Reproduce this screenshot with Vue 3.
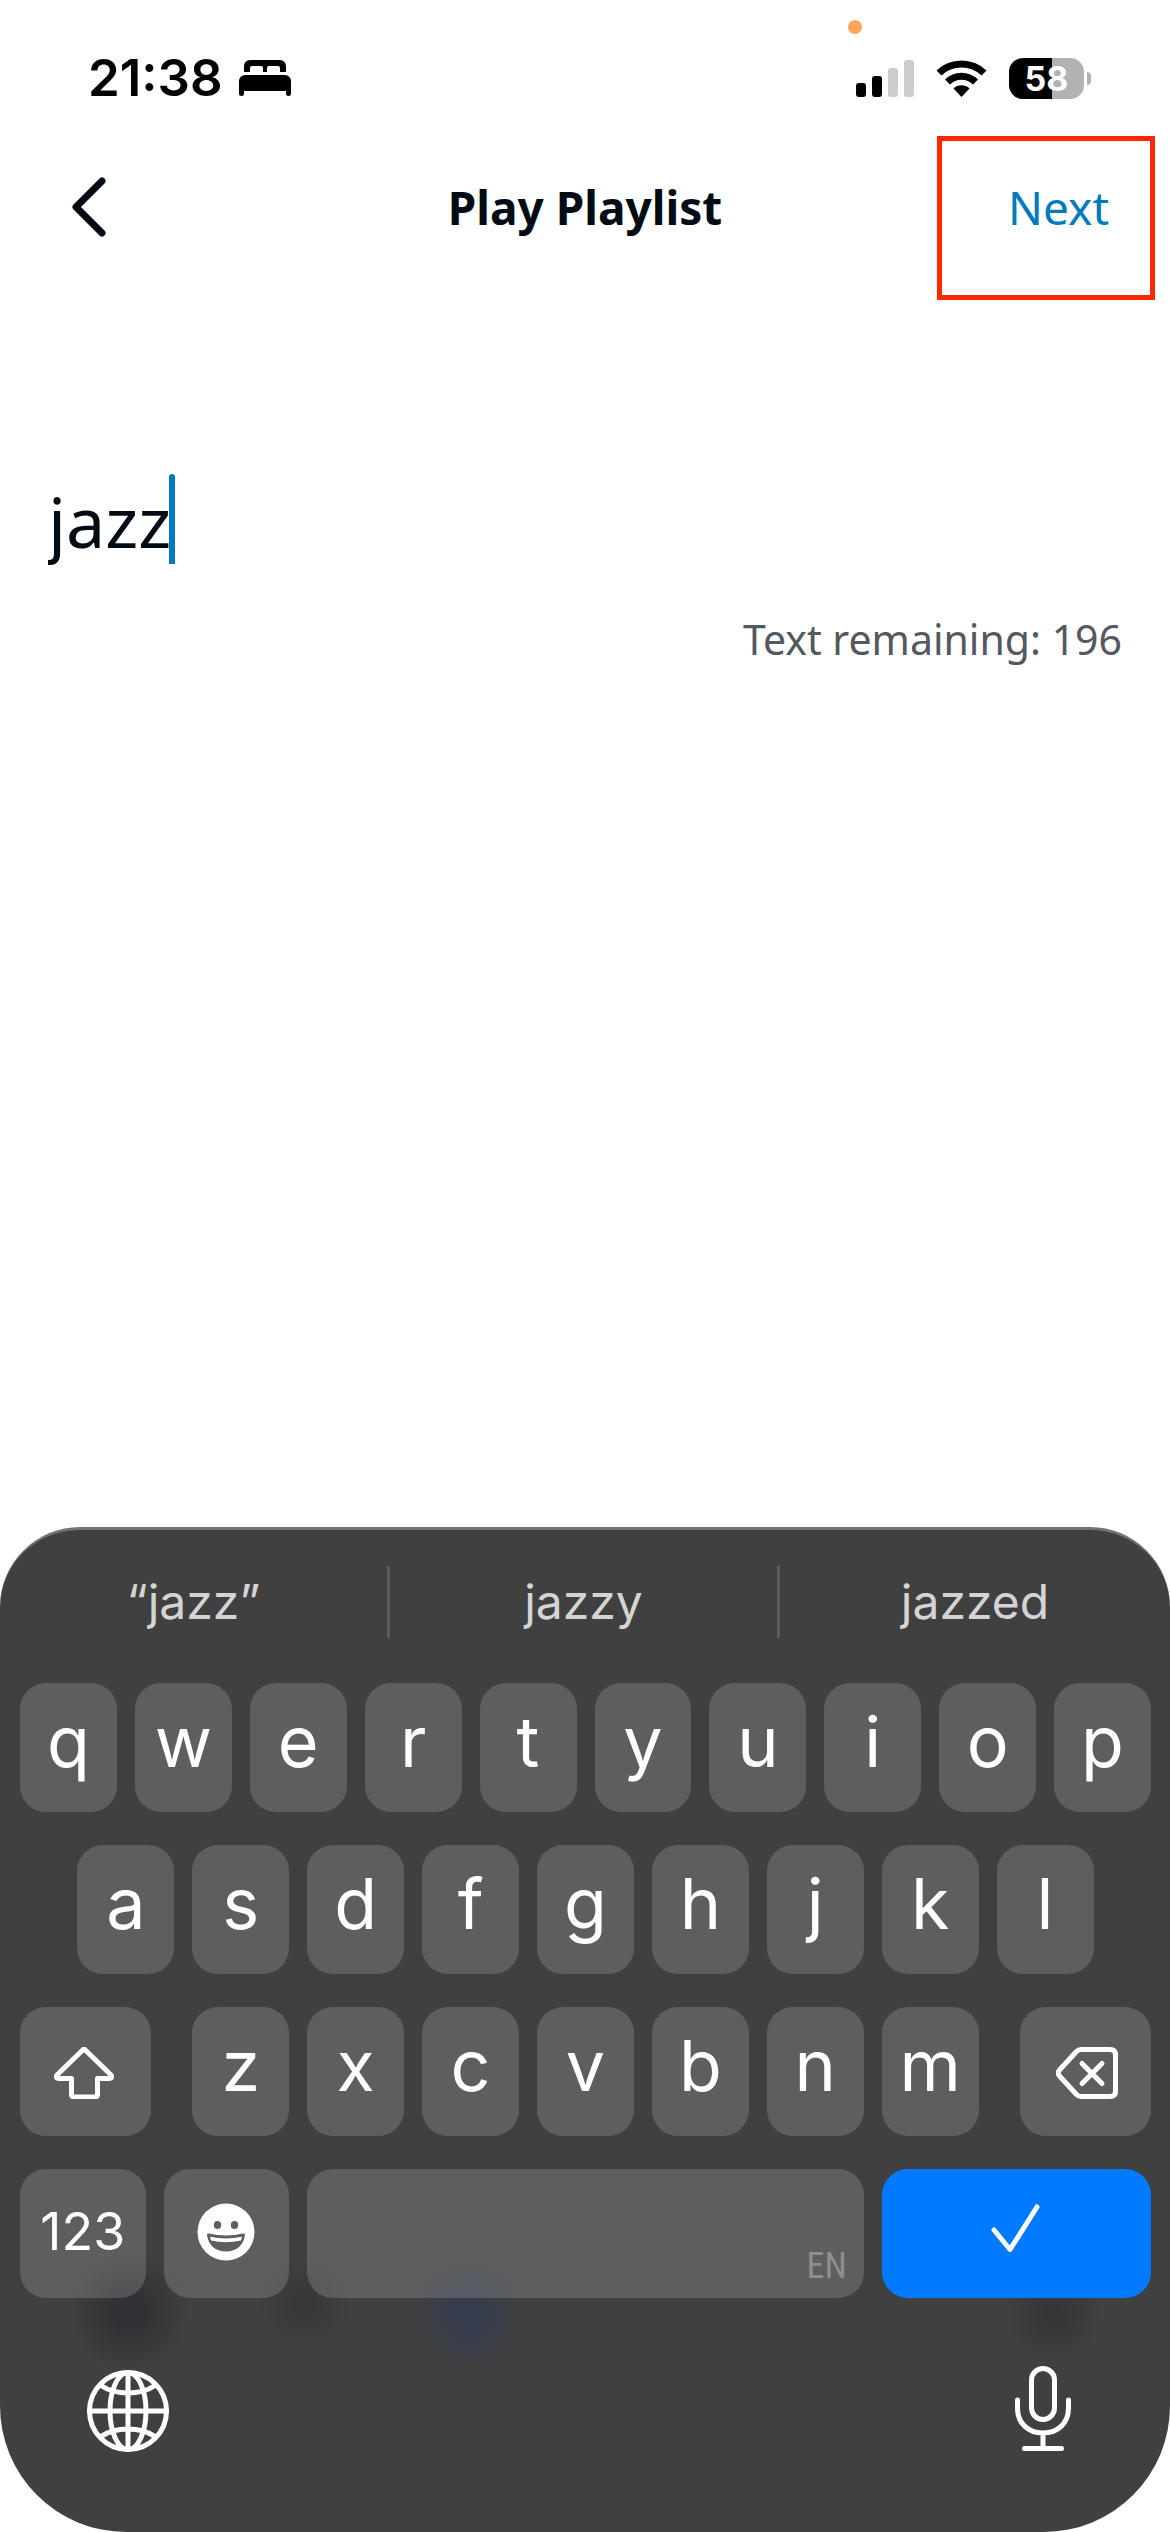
<template>
  <main class="screen">
    <div class="status-bar">
      <div class="status-left">
        <span class="time">21:38</span>
        <svg class="icon-bed" viewBox="0 0 52 36" aria-hidden="true">
          <path d="M5 12V6a6 6 0 0 1 6-6h30a6 6 0 0 1 6 6v6h-6V8q0-2-2-2H30q-2 0-2 2v4h-4V8q0-2-2-2H13q-2 0-2 2v4Z" />
          <path d="M0 21a6 6 0 0 1 6-6h40a6 6 0 0 1 6 6v12.500a2.500 2.500 0 0 1-5 0V31H5v2.500a2.500 2.500 0 0 1-5 0Z" />
        </svg>
      </div>
      <div class="status-right">
        <svg class="icon-signal" viewBox="0 0 58 37" aria-hidden="true">
          <rect x="0" y="23" width="10" height="14" rx="3" />
          <rect x="16" y="16" width="10" height="21" rx="3" />
          <rect class="off" x="32" y="8" width="10" height="29" rx="3" />
          <rect class="off" x="48" y="0" width="10" height="37" rx="3" />
        </svg>
        <svg class="icon-wifi" viewBox="0 0 51 37" aria-hidden="true">
          <path d="M0.500 10.500A36 36 0 0 1 50.500 10.500L45.500 15.500A29 29 0 0 0 5.500 15.500Z" />
          <path d="M9 19.500A23.500 23.500 0 0 1 42 19.500L37 24.500A16.500 16.500 0 0 0 14 24.500Z" />
          <path d="M17.500 28.500A11.500 11.500 0 0 1 33.500 28.500L25.500 37Z" />
        </svg>
        <div class="battery">
          <span class="battery-body">58</span>
          <span class="battery-cap"></span>
        </div>
        <span class="mic-dot"></span>
      </div>
    </div>

    <header class="nav-bar">
      <button class="back-button" type="button" aria-label="Back">
        <svg viewBox="0 0 36 60" aria-hidden="true">
          <path d="M31 4 5 30 31 56" />
        </svg>
      </button>
      <h1 class="title">Play Playlist</h1>
      <button class="next-button" type="button">Next</button>
    </header>

    <section class="form">
      <div class="field">
        <input
          v-model="text"
          class="text-input"
          type="text"
          :maxlength="maxLength"
          aria-label="Playlist name"
        />
        <span class="caret"></span>
      </div>
      <p class="remaining">Text remaining: {{ maxLength - text.length }}</p>
    </section>

    <section class="keyboard">
      <div class="suggestions">
        <button
          v-for="word in suggestions"
          :key="word"
          class="suggestion"
          type="button"
        >
          {{ word }}
        </button>
      </div>

      <div class="keys">
        <button
          v-for="letter in letters"
          :key="letter"
          class="key"
          :class="{ 'row-two': letter === 'a' }"
          type="button"
          @click="insert(letter)"
        >
          {{ letter }}
        </button>

        <button class="key shift" type="button" aria-label="Shift">
          <svg class="icon-shift" viewBox="0 0 60 52" aria-hidden="true">
            <path d="M28.500 3.200Q30 1.500 31.500 3.200L57 28Q59 31.500 55.500 31.500H43.500V47Q43.500 50 40.500 50H20.500Q17.500 50 17.500 47V31.500H4.500Q1 31.500 3 28Z" />
          </svg>
        </button>
        <button
          v-for="letter in lastLetters"
          :key="letter"
          class="key"
          type="button"
          @click="insert(letter)"
        >
          {{ letter }}
        </button>
        <button class="key delete" type="button" aria-label="Delete" @click="removeLast">
          <svg class="icon-delete" viewBox="0 0 62 52" aria-hidden="true">
            <path d="M25 2.500H54Q59.500 2.500 59.500 8V44Q59.500 49.500 54 49.500H25Q22.500 49.500 20.500 47.500L3.500 29Q1 26 3.500 23L20.500 4.500Q22.500 2.500 25 2.500Z" />
            <path d="M26 16.500 46 36.500M46 16.500 26 36.500" />
          </svg>
        </button>

        <div class="key-pair">
          <button class="key numbers" type="button">123</button>
          <button class="key" type="button" aria-label="Emoji">
            <svg class="icon-emoji" viewBox="0 0 58 58" aria-hidden="true">
              <circle class="face" cx="29" cy="29" r="28.500" />
              <ellipse class="hole" cx="20.500" cy="22" rx="3.700" ry="4" />
              <ellipse class="hole" cx="37.500" cy="22" rx="3.700" ry="4" />
              <path class="hole" d="M10 31.500Q10 30 12 30.500Q29 34.500 46 30.500Q48 30 48 31.500C47 42 39.500 48.500 29 48.500S11 42 10 31.500Z" />
              <path class="face" d="M13 33.800Q29 37 45 33.800L44 37.500Q29 41 14 37.500Z" />
            </svg>
          </button>
        </div>
        <button class="key space" type="button" aria-label="Space" @click="insert(' ')">
          <span>EN</span>
        </button>
        <button class="key done" type="button" aria-label="Done">
          <svg class="icon-check" viewBox="0 0 50 48" aria-hidden="true">
            <path d="M3 26 19 45.500 46 3" />
          </svg>
        </button>
      </div>

      <div class="keyboard-footer">
        <button class="footer-button" type="button" aria-label="Change language">
          <svg class="icon-globe" viewBox="0 0 82 82" aria-hidden="true">
            <circle cx="41" cy="41" r="38.500" />
            <ellipse cx="41" cy="41" rx="18" ry="38.500" />
            <path d="M41 2V80M2 41H80M14 15.500Q25 23 41 23T68 15.500M14 66.500Q25 59 41 59T68 66.500" />
          </svg>
        </button>
        <button class="footer-button" type="button" aria-label="Dictate">
          <svg class="icon-mic" viewBox="0 0 56 86" aria-hidden="true">
            <rect x="16.500" y="2.500" width="23" height="51" rx="11.500" />
            <path d="M2.500 34V42C2.500 57 13 67 28 67S53.500 57 53.500 42V34M28 67V82.500M9.500 82.500H46.500" />
          </svg>
        </button>
      </div>
    </section>
  </main>
</template>

<script setup>
import { ref } from 'vue'

const maxLength = 200
const text = ref('jazz')

const suggestions = ['“jazz”', 'jazzy', 'jazzed']
const letters = 'qwertyuiopasdfghjkl'.split('')
const lastLetters = 'zxcvbnm'.split('')

function insert(letter) {
  if (text.value.length < maxLength) {
    text.value += letter
  }
}

function removeLast() {
  text.value = text.value.slice(0, -1)
}
</script>

<style>
body {
  background: #ffffff;
}
</style>

<style scoped>
.screen {
  display: flex;
  flex-direction: column;
  min-height: 100vh;
  color: #000b14;
  font-family: "Noto Sans", sans-serif;
}

button {
  padding: 0;
  border: none;
  background: none;
  color: inherit;
  font: inherit;
  cursor: pointer;
}

svg {
  display: block;
}

/* status bar */
.status-bar {
  display: flex;
  justify-content: space-between;
  align-items: center;
  box-sizing: border-box;
  height: 136px;
  padding: 20px 79px 0 88px;
  color: #000000;
  font-family: Inter, sans-serif;
}

.status-left {
  display: flex;
  align-items: center;
  gap: 16px;
}

.time {
  font-size: 51px;
  font-weight: 600;
  line-height: 60px;
}

.icon-bed {
  width: 52px;
  height: 36px;
}

.status-right {
  position: relative;
  display: flex;
  align-items: center;
  gap: 22px;
}

.icon-signal {
  width: 58px;
  height: 37px;
}

.off {
  fill: #cccccc;
}

.icon-wifi {
  width: 51px;
  height: 37px;
}

.battery {
  display: flex;
  align-items: center;
  gap: 3px;
}

.battery-body {
  width: 75px;
  border-radius: 14px;
  background: linear-gradient(to right, #000000 58%, #b2b2b2 58%);
  color: #ffffff;
  font-size: 34px;
  font-weight: 700;
  line-height: 41px;
  text-align: center;
}

.battery-cap {
  width: 4px;
  height: 13px;
  border-radius: 0 4px 4px 0;
  background: #b2b2b2;
}

.mic-dot {
  position: absolute;
  top: -38px;
  left: -8px;
  width: 14px;
  height: 14px;
  border-radius: 50%;
  background: #ffa557;
}

/* nav bar */
.nav-bar {
  display: grid;
  grid-template-columns: 1fr auto 1fr;
  align-items: start;
  padding: 0 15px;
}

.back-button {
  justify-self: start;
  padding: 41px 56px;
}

.back-button svg {
  width: 36px;
  height: 60px;
  fill: none;
  stroke: #000b14;
  stroke-width: 7;
  stroke-linecap: round;
  stroke-linejoin: round;
}

.title {
  margin: 0;
  padding-top: 43px;
  font-size: 46px;
  font-weight: 700;
  line-height: 56px;
}

.next-button {
  justify-self: end;
  box-sizing: border-box;
  width: 218px;
  padding: 38px 41px 60px 0;
  border: 5px solid #ff2600;
  color: #007abf;
  font-size: 46px;
  line-height: 56px;
  text-align: right;
}

/* text field */
.form {
  padding: 174px 48px 0;
}

.field {
  display: flex;
  align-items: flex-start;
  height: 90px;
}

.text-input {
  field-sizing: content;
  box-sizing: border-box;
  min-width: 0;
  height: 100px;
  padding: 0 0 6px;
  border: none;
  outline: none;
  background: none;
  color: #000b14;
  caret-color: transparent;
  font-family: inherit;
  font-size: 70px;
}

.caret {
  width: 6px;
  height: 90px;
  margin-left: -2px;
  border-radius: 3px 3px 0 0;
  background: #007abf;
}

.remaining {
  margin: 47px 0 0;
  color: #535861;
  font-size: 41px;
  line-height: 56px;
  text-align: right;
}

/* keyboard */
.keyboard {
  margin-top: auto;
  border-top: 3px solid #737373;
  border-radius: 80px 80px 126px 126px;
  background:
    radial-gradient(circle at 11% 782px, #303134 16px, transparent 60px),
    radial-gradient(circle at 26% 774px, #38383b 8px, transparent 48px),
    radial-gradient(circle at 40% 784px, #363c4c 14px, transparent 56px),
    radial-gradient(circle at 90% 784px, #353538 8px, transparent 48px),
    #404040;
  color: #ffffff;
  font-family: Inter, sans-serif;
}

.suggestions {
  display: grid;
  grid-template-columns: repeat(3, 1fr);
  padding: 36px 0 45px;
}

.suggestion {
  border-right: 3px solid #5c5c5c;
  color: #d4d4d4;
  font-size: 48px;
  line-height: 72px;
}

.suggestion:last-child {
  border-right: none;
}

/* twenty half-key columns, a letter takes two */
.keys {
  display: grid;
  grid-template-columns: repeat(20, minmax(0, 1fr));
  gap: 33px 18px;
  padding: 0 19px 0 20px;
}

.key {
  display: flex;
  grid-column: span 2;
  justify-content: center;
  align-items: center;
  height: 129px;
  padding-bottom: 12px;
  border-radius: 26px;
  background: rgba(255, 255, 255, 0.16);
  font-size: 70px;
}

.row-two {
  grid-column: 2 / span 2;
}

.shift {
  grid-column: 1 / span 3;
  margin-right: 23px;
  padding: 2px 3px 0 0;
}

.delete {
  grid-column: 18 / span 3;
  margin-left: 23px;
  padding: 2px 0 0 3px;
}

.icon-shift,
.icon-delete,
.icon-check {
  height: 52px;
  fill: none;
  stroke: #ffffff;
  stroke-width: 5;
  stroke-linecap: round;
  stroke-linejoin: round;
}

.key-pair {
  display: flex;
  grid-column: span 5;
  gap: 18px;
}

.key-pair .key {
  flex: 1;
  padding: 0 0 4px;
}

.key-pair .numbers {
  font-size: 52px;
}

.icon-emoji {
  width: 58px;
  height: 58px;
}

.face {
  fill: #ffffff;
}

.hole {
  fill: #5e5e5e;
}

.space {
  grid-column: span 10;
  justify-content: flex-end;
  align-items: flex-end;
  padding: 0 17px 12px 0;
  color: #8e8e8e;
  font-family: "Roboto Condensed", "Liberation Sans Narrow", Roboto, sans-serif;
  font-size: 36px;
  line-height: 40px;
}

.done {
  grid-column: span 5;
  background: #007aff;
}

.icon-check {
  height: 48px;
}

.keyboard-footer {
  display: flex;
  justify-content: space-between;
  align-items: flex-end;
  padding: 68px 99px 80px 87px;
}

.footer-button svg {
  fill: none;
  stroke: #ffffff;
  stroke-width: 5;
  stroke-linecap: round;
}

.icon-globe {
  width: 82px;
  height: 82px;
}

.icon-mic {
  width: 56px;
  height: 86px;
}
</style>
